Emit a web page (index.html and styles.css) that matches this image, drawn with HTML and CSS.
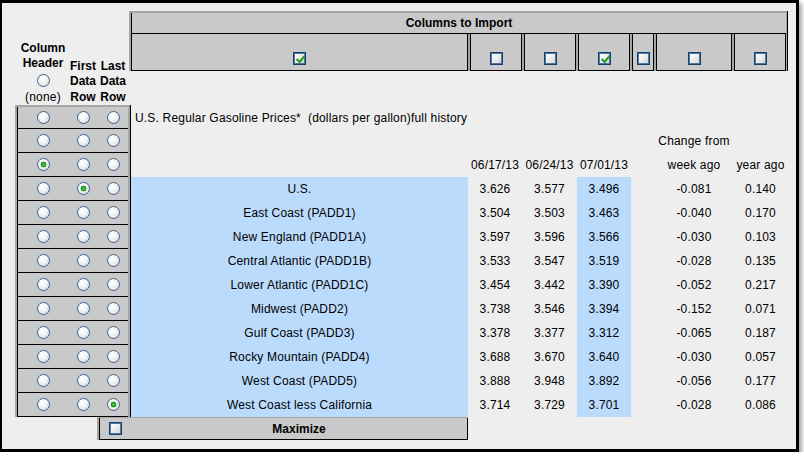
FILE: index.html
```html
<!DOCTYPE html>
<html>
<head>
<meta charset="utf-8">
<title>Columns to Import</title>
<link rel="stylesheet" href="styles.css">
</head>
<body>
<div class="window">
  <div class="top">
    <div class="labels">
      <div class="lab-col">
        <div>Column</div>
        <div>Header</div>
        <div class="rbox"><span class="radio"></span></div>
        <div class="none">(none)</div>
      </div>
      <div class="lab-col"><div>First</div><div>Data</div><div>Row</div></div>
      <div class="lab-col"><div>Last</div><div>Data</div><div>Row</div></div>
    </div>
    <div class="cols">
      <div class="cols-title">Columns to Import</div>
      <div class="cols-checks">
        <div class="ccell w1"><span class="cb"><svg viewBox="0 0 9 9"><path d="M1.3 4.6 L3.6 6.9 L7.8 1.9"/></svg></span></div>
        <div class="ccell w2"><span class="cb"></span></div>
        <div class="ccell w2"><span class="cb"></span></div>
        <div class="ccell w2"><span class="cb"><svg viewBox="0 0 9 9"><path d="M1.3 4.6 L3.6 6.9 L7.8 1.9"/></svg></span></div>
        <div class="ccell w5"><span class="cb"></span></div>
        <div class="ccell w6"><span class="cb"></span></div>
        <div class="ccell w2"><span class="cb"></span></div>
      </div>
    </div>
  </div>

  <div class="main">
    <div class="panel">
      <div class="prow r0"><span class="radio"></span><span class="radio"></span><span class="radio"></span></div>
      <div class="prow"><span class="radio"></span><span class="radio"></span><span class="radio"></span></div>
      <div class="prow"><span class="radio on"></span><span class="radio"></span><span class="radio"></span></div>
      <div class="prow"><span class="radio"></span><span class="radio on"></span><span class="radio"></span></div>
      <div class="prow"><span class="radio"></span><span class="radio"></span><span class="radio"></span></div>
      <div class="prow"><span class="radio"></span><span class="radio"></span><span class="radio"></span></div>
      <div class="prow"><span class="radio"></span><span class="radio"></span><span class="radio"></span></div>
      <div class="prow"><span class="radio"></span><span class="radio"></span><span class="radio"></span></div>
      <div class="prow"><span class="radio"></span><span class="radio"></span><span class="radio"></span></div>
      <div class="prow"><span class="radio"></span><span class="radio"></span><span class="radio"></span></div>
      <div class="prow"><span class="radio"></span><span class="radio"></span><span class="radio"></span></div>
      <div class="prow"><span class="radio"></span><span class="radio"></span><span class="radio"></span></div>
      <div class="prow"><span class="radio"></span><span class="radio"></span><span class="radio on"></span></div>
    </div>

    <div class="data">
      <div class="drow r0"><div class="title">U.S. Regular Gasoline Prices*&nbsp; (dollars per gallon)full history</div></div>
      <div class="drow"><div></div><div></div><div></div><div></div><div></div><div class="wide">Change from</div><div></div></div>
      <div class="drow"><div></div><div>06/17/13</div><div>06/24/13</div><div>07/01/13</div><div></div><div>week ago</div><div>year ago</div></div>
      <div class="drow"><div class="hl">U.S.</div><div>3.626</div><div>3.577</div><div class="hl">3.496</div><div></div><div>-0.081</div><div>0.140</div></div>
      <div class="drow"><div class="hl">East Coast (PADD1)</div><div>3.504</div><div>3.503</div><div class="hl">3.463</div><div></div><div>-0.040</div><div>0.170</div></div>
      <div class="drow"><div class="hl">New England (PADD1A)</div><div>3.597</div><div>3.596</div><div class="hl">3.566</div><div></div><div>-0.030</div><div>0.103</div></div>
      <div class="drow"><div class="hl">Central Atlantic (PADD1B)</div><div>3.533</div><div>3.547</div><div class="hl">3.519</div><div></div><div>-0.028</div><div>0.135</div></div>
      <div class="drow"><div class="hl">Lower Atlantic (PADD1C)</div><div>3.454</div><div>3.442</div><div class="hl">3.390</div><div></div><div>-0.052</div><div>0.217</div></div>
      <div class="drow"><div class="hl">Midwest (PADD2)</div><div>3.738</div><div>3.546</div><div class="hl">3.394</div><div></div><div>-0.152</div><div>0.071</div></div>
      <div class="drow"><div class="hl">Gulf Coast (PADD3)</div><div>3.378</div><div>3.377</div><div class="hl">3.312</div><div></div><div>-0.065</div><div>0.187</div></div>
      <div class="drow"><div class="hl">Rocky Mountain (PADD4)</div><div>3.688</div><div>3.670</div><div class="hl">3.640</div><div></div><div>-0.030</div><div>0.057</div></div>
      <div class="drow"><div class="hl">West Coast (PADD5)</div><div>3.888</div><div>3.948</div><div class="hl">3.892</div><div></div><div>-0.056</div><div>0.177</div></div>
      <div class="drow"><div class="hl">West Coast less California</div><div>3.714</div><div>3.729</div><div class="hl">3.701</div><div></div><div>-0.028</div><div>0.086</div></div>
    </div>
  </div>

  <div class="bar">
    <div class="bar-in">
      <div class="bar-cb"><span class="cb"></span></div>
      <div class="bar-label">Maximize</div>
    </div>
  </div>
</div>
</body>
</html>
```

FILE: styles.css
```css
html, body {
  margin: 0;
  padding: 0;
  background: #ffffff;
}

body {
  font-family: "Liberation Sans", Arial, sans-serif;
  font-size: 12px;
  color: #000;
}

.window {
  width: 799px;
  height: 452px;
  box-sizing: border-box;
  border-style: solid;
  border-color: #000;
  border-width: 3px 3px 3px 2px;
  background: #eeeeee;
  box-shadow: 3px 3px 4px rgba(0, 0, 0, 0.35);
}

/* ---------- top area ---------- */
.top {
  display: flex;
  height: 102px;
}

.labels {
  margin-left: 16px;
  width: 110px;
  display: grid;
  grid-template-columns: 50px 30px 30px;
  font-weight: bold;
  line-height: 15.5px;
  text-align: center;
}

.lab-col {
  display: flex;
  flex-direction: column;
  justify-content: flex-end;
}

.lab-col .none {
  font-weight: normal;
  letter-spacing: 0.2px;
}

.rbox {
  height: 18px;
  display: flex;
  align-items: center;
  justify-content: center;
}

.cols {
  margin: 8px 0 0 1px;
  background: #a6a6a6;
  padding: 2px 1px 0 2px;
  border-right: 1px solid #000;
  align-self: flex-start;
}

.cols-title {
  height: 21px;
  box-sizing: border-box;
  border-left: 1px solid #000;
  border-bottom: 1px solid #000;
  background: #c9c9c9;
  font-weight: bold;
  text-align: center;
  line-height: 20px;
}

.cols-checks {
  display: flex;
  gap: 2px;
}

.ccell {
  height: 37px;
  box-sizing: border-box;
  border-left: 1px solid #000;
  border-right: 1px solid #000;
  border-bottom: 1px solid #000;
  background: #c9c9c9;
  display: flex;
  align-items: flex-end;
  justify-content: center;
  padding-bottom: 5px;
}

.w1 { width: 337px; }
.w2 { width: 52px; }
.w5 { width: 22px; }
.w6 { width: 76px; }

/* ---------- controls ---------- */
.cb {
  display: block;
  width: 13px;
  height: 13px;
  box-sizing: border-box;
  border: 1px solid #173f69;
  box-shadow: inset 0 0 0 1px #4f78a1;
  background: linear-gradient(135deg, #ffffff 0%, #f2f2f2 40%, #cfcfcf 100%);
  padding: 2px;
}

.cb svg {
  display: block;
  width: 9px;
  height: 9px;
}

.cb path {
  fill: none;
  stroke: #1f9d1f;
  stroke-width: 2;
  stroke-linecap: square;
}

.radio {
  display: block;
  width: 13px;
  height: 13px;
  box-sizing: border-box;
  border-radius: 50%;
  border: 1px solid #3a6591;
  background: radial-gradient(circle at 40% 35%, #ffffff 0%, #f6f6f6 35%, #d2d2d2 100%);
}

.radio.on {
  background:
    radial-gradient(circle at 50% 50%, #5fd45f 0, #1b9c1b 2px, #178a17 2.6px, rgba(23, 138, 23, 0) 3.2px),
    radial-gradient(circle at 40% 35%, #ffffff 0%, #f6f6f6 35%, #d2d2d2 100%);
}

/* ---------- main ---------- */
.main {
  display: flex;
  align-items: flex-start;
}

.panel {
  margin-left: 13px;
  width: 116px;
  box-sizing: border-box;
  background: #a6a6a6;
  padding: 2px 2px 0 2px;
  border-right: 1px solid #000;
}

.prow {
  height: 24px;
  box-sizing: border-box;
  border-left: 1px solid #000;
  border-bottom: 1px solid #000;
  background: #c9c9c9;
  display: grid;
  grid-template-columns: 50px 30px 30px;
  align-items: center;
  justify-items: center;
}

.prow.r0 {
  height: 22px;
}

.data {
  margin-top: 2px;
  letter-spacing: 0.18px;
}

.drow {
  display: grid;
  grid-template-columns: 337px 54px 55px 54px 24px 78px 55px;
  height: 24px;
  line-height: 24px;
  text-align: center;
  white-space: nowrap;
}

.drow.r0 {
  height: 22px;
  line-height: 22px;
}

.drow .title {
  grid-column: 1 / 8;
  text-align: left;
  padding-left: 4px;
}

.hl {
  background: #bbdbfd;
}

/* ---------- bottom bar ---------- */
.bar {
  width: 371px;
  box-sizing: border-box;
  margin: -1px 0 0 95px;
  background: #a6a6a6;
  padding: 2px 0 0 2px;
}

.bar-in {
  height: 22px;
  box-sizing: border-box;
  border-left: 1px solid #000;
  border-right: 1px solid #000;
  border-bottom: 1px solid #000;
  background: #c9c9c9;
  display: grid;
  grid-template-columns: 31px 1fr;
  align-items: center;
}

.bar-cb {
  display: flex;
  justify-content: center;
}

.bar-label {
  text-align: center;
  font-weight: bold;
}
```
